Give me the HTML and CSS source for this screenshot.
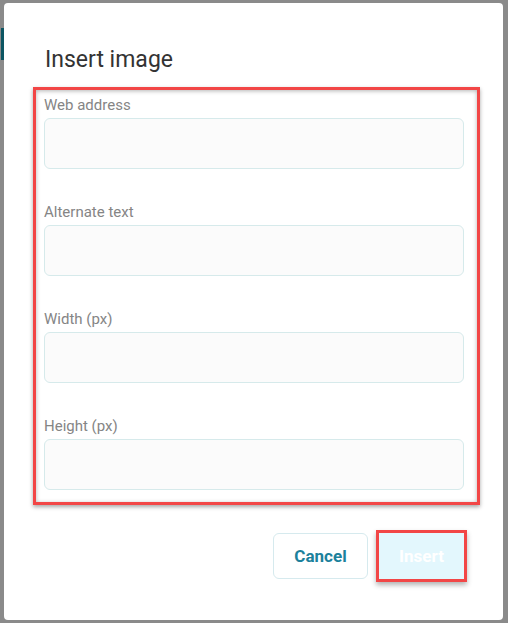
FILE: index.html
```html
<!DOCTYPE html>
<html lang="en">
<head>
<meta charset="utf-8">
<title>Insert image</title>
<link rel="stylesheet" href="styles.css">
</head>
<body>
<div class="backdrop">
  <div class="modal" role="dialog" aria-labelledby="dlg-title">
    <h2 class="modal-title" id="dlg-title">Insert image</h2>
    <form class="image-form">
      <div class="field">
        <label class="field-label" for="f-url">Web address</label>
        <input class="field-input" id="f-url" type="text">
      </div>
      <div class="field">
        <label class="field-label" for="f-alt">Alternate text</label>
        <input class="field-input" id="f-alt" type="text">
      </div>
      <div class="field">
        <label class="field-label" for="f-w">Width (px)</label>
        <input class="field-input" id="f-w" type="text">
      </div>
      <div class="field">
        <label class="field-label" for="f-h">Height (px)</label>
        <input class="field-input" id="f-h" type="text">
      </div>
    </form>
    <div class="actions">
      <button class="btn btn-cancel" type="button">Cancel</button>
      <button class="btn btn-insert" type="button">Insert</button>
    </div>
  </div>
</div>
</body>
</html>
```

FILE: styles.css
```css
html, body {
  margin: 0;
  padding: 0;
}

body {
  font-family: Roboto, "Liberation Sans", Arial, sans-serif;
  background:
    linear-gradient(#0c5562, #0c5562) 1px 28px / 3px 32px no-repeat,
    #8a8a8a;
  width: 508px;
  height: 623px;
  overflow: hidden;
}

.backdrop {
  padding: 3px 5px 3px 4px;
  box-sizing: border-box;
  height: 623px;
}

.modal {
  background: #ffffff;
  border-radius: 4px;
  height: 617px;
  box-sizing: border-box;
  padding: 41px 0 0 29px;
}

.modal-title {
  margin: 0 0 11px 12px;
  font-size: 23px;
  line-height: 32px;
  font-weight: 400;
  color: #333333;
}

.image-form {
  width: 447px;
  box-sizing: border-box;
  border: 3px solid #f24646;
  padding: 5px 13px 12px 8px;
  display: flex;
  flex-direction: column;
  gap: 33px;
  box-shadow: 0 2px 4px rgba(0, 0, 0, 0.35), inset 0 1px 4px rgba(0, 0, 0, 0.3);
}

.field {
  display: flex;
  flex-direction: column;
  gap: 3px;
}

.field-label {
  font-size: 15px;
  line-height: 20px;
  color: #858585;
}

.field-input {
  display: block;
  width: 100%;
  height: 51px;
  box-sizing: border-box;
  border: 1px solid #d6eaeb;
  border-radius: 6px;
  background: #fbfbfb;
  font: inherit;
  padding: 0 12px;
  margin: 0;
}

.actions {
  display: flex;
  justify-content: flex-end;
  gap: 11px;
  margin-top: 28px;
  padding-right: 39px;
}

.btn {
  height: 46px;
  box-sizing: border-box;
  padding: 0;
  border-radius: 6px;
  font-family: Roboto, "Liberation Sans", Arial, sans-serif;
  font-size: 17px;
  font-weight: 700;
  cursor: pointer;
}

.btn-cancel {
  background: #ffffff;
  border: 1px solid #d6eaee;
  color: #1c819c;
  width: 95px;
}

.btn-insert {
  background: #e3f7fd;
  border: none;
  border-radius: 0;
  color: #ffffff;
  width: 85px;
  outline: 3px solid #f24646;
  box-shadow: 0 3px 5px 3px rgba(0, 0, 0, 0.3);
}
```
